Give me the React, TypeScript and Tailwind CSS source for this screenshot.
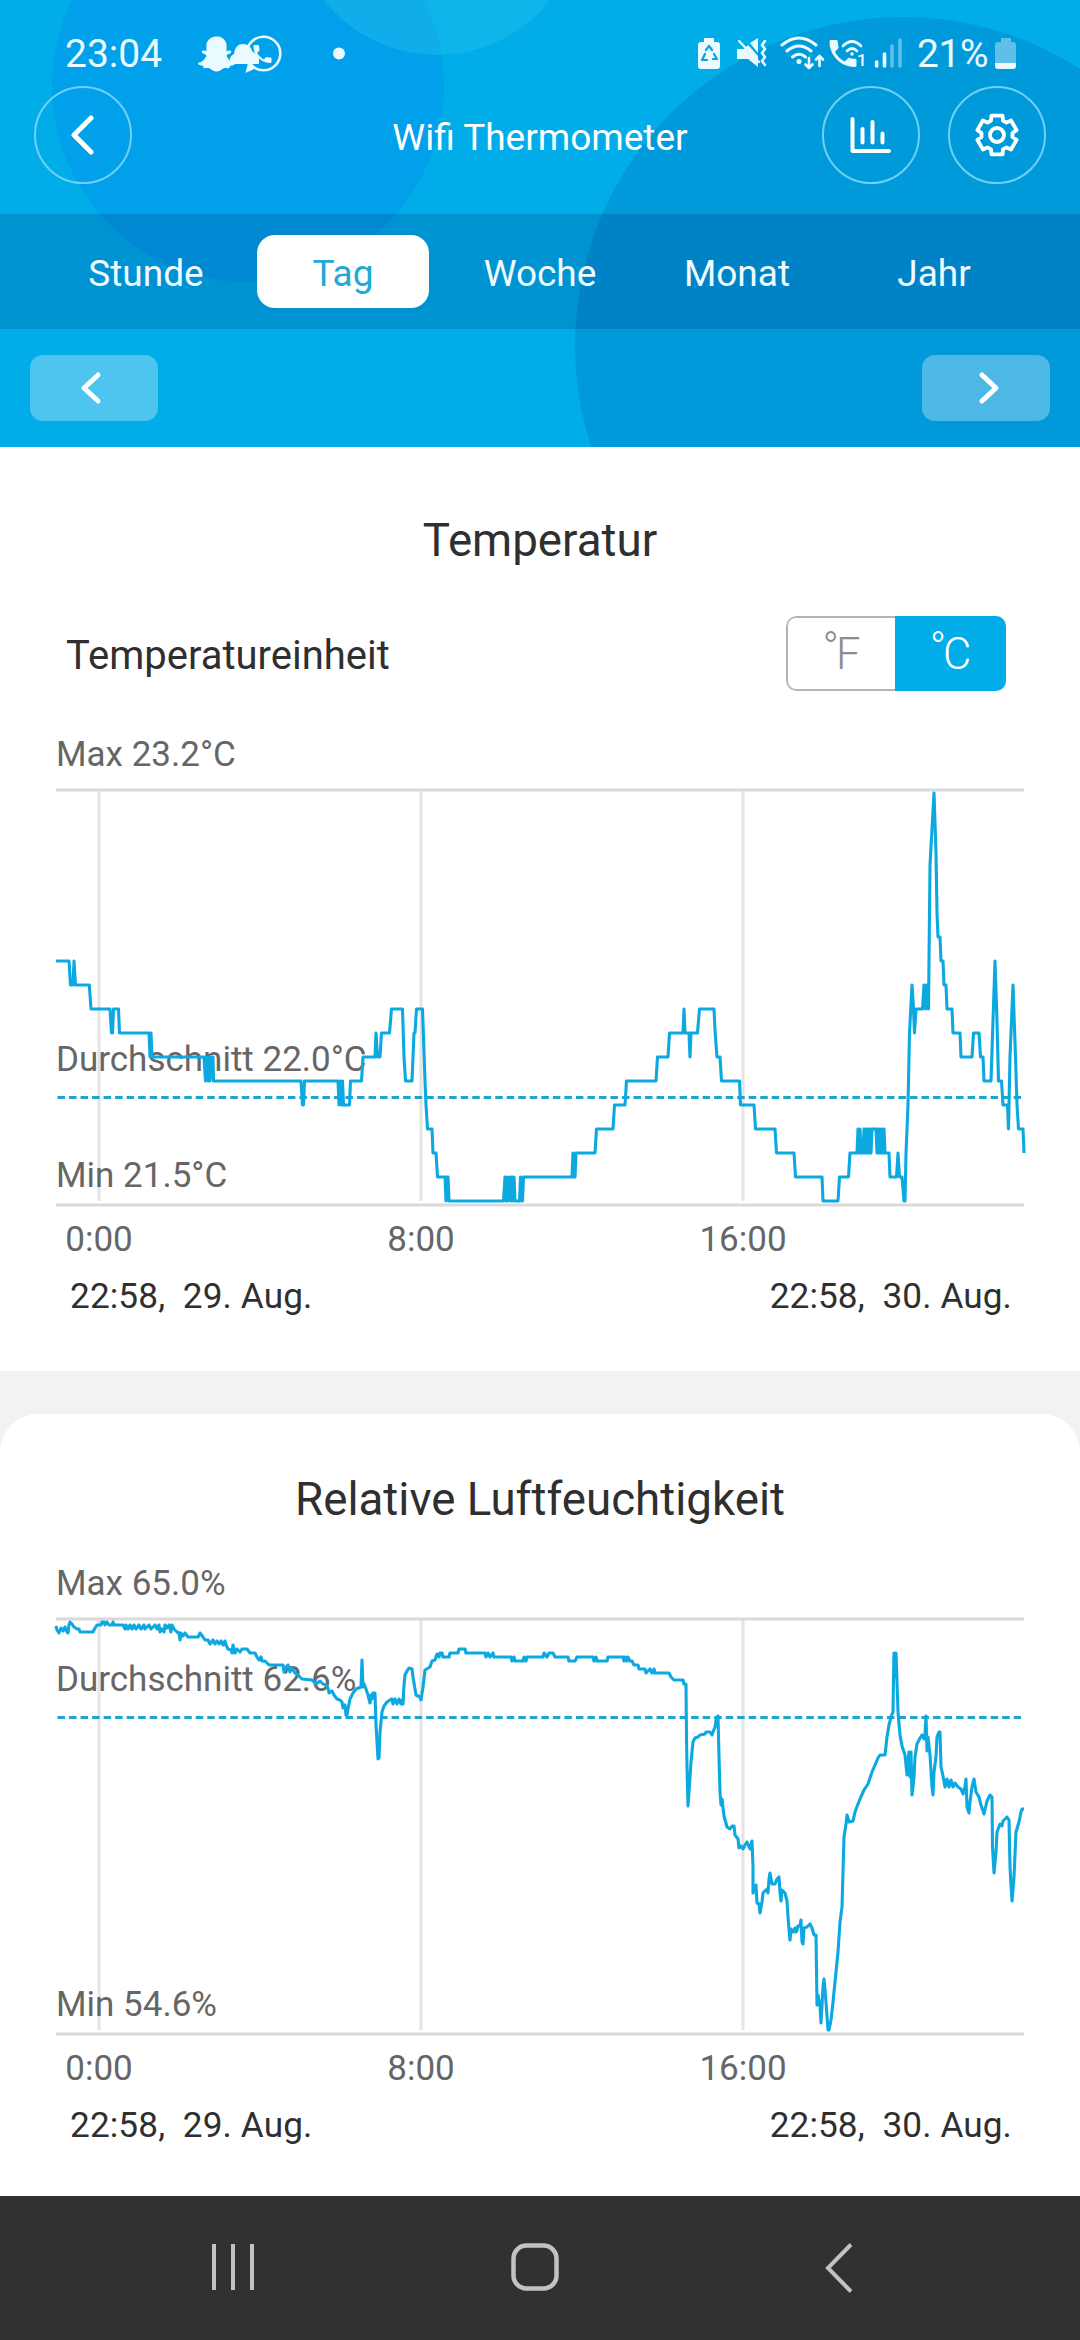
import React from 'react';
import { FaSnapchatGhost } from 'react-icons/fa';

const TABS = ['Stunde', 'Tag', 'Woche', 'Monat', 'Jahr'];

// [x, tenths of a degree above the minimum]
const TEMPERATURE = [
  [56, 10], [69, 10], [70.5, 9], [73, 9], [74, 10], [75.5, 9], [89.3, 9], [91, 8], [110, 8], [111.5, 7], [112.5, 7], [113.5, 8],
  [118.5, 8], [119.5, 7], [149, 7], [150, 6], [151, 7], [152, 6], [204, 6], [205.5, 5], [206.5, 6], [208, 5], [209, 6],
  [210, 5], [211.5, 6], [213, 6], [213.5, 5], [301, 5], [302.5, 4], [303.5, 4], [304.5, 5], [338, 5], [339, 4], [340.5, 5], [341.5, 4],
  [342.5, 5], [343.5, 4], [349.5, 4], [350.5, 5], [361.5, 5], [363, 6], [375, 6], [376, 7], [377.5, 6], [380, 6], [381.5, 7],
  [389.5, 7], [391.5, 8], [402.5, 8], [404, 6], [405.5, 5], [412, 5], [414, 7], [415, 7], [416.5, 8], [422.5, 8],
  [425, 5], [426, 4], [427.5, 3], [432, 3], [433, 2], [436, 2], [437.5, 1], [445, 1], [446, 0], [447, 1], [448, 1],
  [449, 0], [503.5, 0], [505, 1], [506, 0], [507, 1], [508, 0], [510, 1], [511, 0], [512, 1], [513, 0], [514, 1], [515, 0],
  [519.5, 0], [520.5, 1], [521.5, 0], [522.5, 0], [523.5, 1], [572, 1], [573, 2], [574, 1], [575, 1], [576, 2], [595, 2],
  [596.5, 3], [613, 3], [614.5, 4], [625, 4], [626.5, 5], [656, 5], [657.5, 6], [668, 6], [669.5, 7], [683, 7],
  [684, 8], [685, 7], [689, 7], [690, 6], [691, 7], [697.5, 7], [699.5, 8], [714, 8], [715, 7.1], [717, 6], [720, 6],
  [721.5, 5], [739.5, 5], [740.5, 4], [754, 4], [755.5, 3], [775, 3], [776.5, 2], [794, 2], [795.5, 1], [822, 1],
  [823, 0], [838, 0], [839.5, 1], [848.5, 1], [850, 2], [857, 2], [858, 3], [859, 2], [860, 3], [861, 2], [863, 2],
  [864, 3], [865, 2], [866, 3], [867, 2], [868, 3], [869, 2], [870, 3], [871, 2], [872, 3], [874, 3], [876, 3],
  [877, 2], [878, 3], [879, 2], [880, 3], [881, 2], [882, 3], [883, 2], [884, 3], [885, 2], [889, 2], [890, 1], [896.5, 1],
  [898, 2], [899.5, 1], [902, 1], [904, 0], [905, 0], [906, 2], [908, 4], [909.5, 7], [912, 9], [913.5, 8], [914.5, 7],
  [916, 8], [922.5, 8], [924, 9], [925.5, 8], [926.5, 9], [928.5, 8], [930, 14], [932, 15.5], [934, 17], [936, 14.5],
  [937, 12], [938, 11], [940, 11], [941, 10], [943, 10], [944, 9], [946, 9], [947, 8], [952, 8], [953, 7], [960, 7],
  [961, 6], [972, 6], [973.5, 7], [979, 7], [980.5, 6], [983, 6], [984, 5], [991, 5], [993, 7.5], [995, 10],
  [997, 7.5], [998.5, 5], [1001.5, 5], [1003, 4], [1007.5, 4], [1008.5, 3], [1010, 6], [1013, 9], [1015.5, 6], [1017, 4],
  [1018.5, 3], [1023, 3], [1024, 2],
]
  .map(([x, n]) => `${x},${413 - 24 * n}`)
  .join(' ');

const HUMIDITY =
  '56,9 57,13 59,16 61,11 63,14 65,10 67,15 68,16 69,8 70,5 72,7 74,10 77,12 79,12 80,15 93,15 95,11 97,8 101,8 102,5 104,5 105,8 107,5 109,8 112,8 113,5 114,8 123,8 125,12 126,8 128,12 130,8 132,12 134,8 136,12 139,8 141,12 144,8 145,12 149,8 151,12 155,8 157,12 159,8 160,15 162,12 164,15 165,8 167,11 169,8 171,15 172,8 174,12 177,15 179,16 180,23 181,16 183,19 185,16 188,20 198,20 200,16 203,20 205,23 208,23 210,27 213,23 215,27 217,24 219,27 221,24 223,28 225,24 226,28 228,32 231,33 232,36 233,28 235,36 237,32 240,35 242,32 247,32 250,36 255,36 257,40 259,43 261,40 262,44 265,44 269,48 283,48 284,55 286,50 288,48 290,55 292,51 295,56 299,59 302,62 312,63 316,67 320,64 323,67 326,68 328,71 329,76 332,74 334,78 337,82 340,83 342,85 343,91 345,88 346,98 347,98 348,92 350,82 353,76 356,72 361,70 362,43 363,70 364,67 366,72 368,78 370,86 371,78 372,82 373,76 375,76 376,108 378,142 379,141 380,115 382,95 384,89 387,85 390,83 392,82 393,87 395,82 397,87 399,82 401,87 402,83 403,87 404,68 405,58 407,54 409,51 412,52 413,60 416,78 420,80 421,83 423,70 425,53 430,50 432,44 435,43 437,37 439,40 440,36 442,36 443,40 449,40 450,36 458,36 459,32 465,32 466,36 485,36 486,40 488,36 490,40 493,36 494,40 511,40 512,44 514,40 515,44 523,44 524,40 526,44 527,40 543,40 544,36 547,40 549,36 553,36 555,40 568,40 569,44 575,44 577,40 593,40 594,44 596,40 597,44 607,44 608,40 623,40 624,44 625,40 627,44 628,40 630,44 632,44 634,48 638,48 639,52 645,52 646,56 650,52 652,56 654,52 655,56 669,56 671,60 674,63 683,63 684,67 686,67 686.5,120 687,150 688,189 690,160 691,145 693,125 695,121 698,120 700,118 705,117 706,115 710,115 712,118 713,115 715,110 716,103 718,99 719,140 720,175 721,188 722,182 724,199 727,210 730,212 732,209 734,209 735,218 738,222 739,231 741,229 743,232 745,228 747,225 750,232 752,224 753,250 753,276 754,272 756,268 757,286 759,287 760,296 762,285 763,276 767,272 768,276 769,262 770,256 772,267 775,267 777,262 779,260 780,275 781,284 782,273 785,276 787,284 788,300 789,312 790,323 791,312 793,315 795,311 796,315 797,313 798,309 800,309 801,303 802,325 803,327 804,311 807,310 810,307 812,311 814,318 816,318 817,388 818,378 820,389 821,406 823,370 824,362 826,385 828,413 829,413 831,403 833,385 835,365 838,335 840,305 842,290 844,220 846,207 847,198 849,205 853,204 855,195 858,187 860,182 864,173 868,167 872,155 875,148 878,141 880,138 885,138 887,120 889,108 891,100 893,95 893.5,60 894,36 895,60 896,36 898,95 900,118 902,129 905,138 907,158 908,145 909,135 910,160 911,135 912,178 914,160 915,140 917,127 920,121 922,118 924,122 925,118 926,99 927,134 928,120 930,138 932,170 933,178 934,155 936,140 937,120 939,115 940,115 941,150 943,159 945,170 947,162 949,170 951,163 953,170 955,166 958,170 961,172 963,177 965,170 966,162 967,190 969,196 970,185 972,170 974,162 976,175 979,180 981,188 984,197 987,184 990,178 992,180 992.5,230 994,256 996,235 997,215 1000,207 1002,209 1003,204 1007,200 1009,203 1010,250 1011,268 1012,284 1014,260 1016,215 1019,205 1021,195 1022,192 1024,192';

const HANDSET =
  'M6.62 10.79c1.44 2.83 3.76 5.14 6.59 6.59l2.2-2.2c.27-.27.67-.36 1.02-.24 1.12.37 2.33.57 3.57.57.55 0 1 .45 1 1V20c0 .55-.45 1-1 1-9.390 0-17-7.610-17-17 0-.55.45-1 1-1h3.500c.55 0 1 .45 1 1 0 1.250.2 2.450.57 3.570.11.35.03.74-.25 1.020l-2.200 2.200z';

// outline of a cog with six teeth, centred on 0,0
const COG = Array.from({ length: 6 })
  .flatMap((_, i) =>
    [[-16, 20.2], [16, 20.2], [22.5, 15.6], [37.5, 15.6]].map(([deg, r]) => {
      const a = ((i * 60 + deg) * Math.PI) / 180;
      return `${(r * Math.sin(a)).toFixed(2)},${(-r * Math.cos(a)).toFixed(2)}`;
    })
  )
  .join(' ');

const StatusBar = () => (
  <div className="flex h-[86px] justify-between pl-[65px] pr-[63px] text-[39px] leading-[42px] text-[#eafaff]">
    <div className="flex pt-[33px]">
      <span>23:04</span>
      <div className="relative ml-[36px] h-[42px] w-[152px]">
        <FaSnapchatGhost className="absolute left-0 top-[2px] h-[38px] w-[37px]" />
        <svg className="absolute left-[-1px] top-0" width="154" height="42" viewBox="196 33 154 42">
          <path d="M229 64c-1-6 1-9 4-10c1-7 4-10 9-10c5 0 8 3 9 7l7 5v8z" fill="currentColor" />
          <circle cx="262.5" cy="53.5" r="16.8" fill="none" stroke="currentColor" strokeWidth="2.6" />
          <path d="M244.500 73l3-12l8 7z" fill="currentColor" />
          <path d={HANDSET} transform="translate(249.500 42) scale(1)" fill="currentColor" />
          <circle cx="338" cy="53.5" r="6" fill="currentColor" />
        </svg>
      </div>
    </div>
    <div className="flex pt-[33px]">
      <div className="relative">
        <svg width="220" height="42" viewBox="696 33 220 42" fill="none" stroke="currentColor" strokeLinecap="round" strokeLinejoin="round">
          <path d="M703 38h10v4h3q3 0 3 3v21q0 3-3 3h-16q-3 0-3-3v-21q0-3 3-3h3z" fill="currentColor" stroke="none" />
          <path d="M705 50l3-4l3 4M713 54l3 5h-4M706 60h-5l3-6" stroke="#0aa3df" strokeWidth="2.2" />
          <path d="M736 49h7l4-4L757 56v11l-10-8h-11zM749 43l8-5v15z" fill="currentColor" stroke="none" />
          <path d="M738 41l20 21" strokeWidth="2.4" />
          <path d="M764 41l-3 4l3 4l-3 4l3 4l-3 4l3 4" strokeWidth="2.6" />
          <path d="M781 45q17-14 34 0M786 51q12-10 24 0M791.5 57q6.500-5.500 13 0" strokeWidth="3" />
          <circle cx="798" cy="61.500" r="2.500" fill="currentColor" stroke="none" />
          <path d="M808 58v10M804.500 64.500l3.500 3.500l3.500-3.500M818.500 66v-10M815 59.500l3.500-3.500l3.500 3.500" strokeWidth="2.6" />
          <path d={HANDSET} transform="translate(824 35.500) scale(1.5)" fill="currentColor" stroke="none" />
          <path d="M842 46q9-9 18 0M846 51q5-5 10 0" strokeWidth="2.600" />
          <circle cx="851" cy="54" r="1.800" fill="currentColor" stroke="none" />
          <path d="M875.700 62v4M883.500 54v12" strokeWidth="3.600" />
          <path d="M891 46v20M899 40v26" strokeWidth="3.600" opacity=".4" />
        </svg>
        <span className="absolute left-[160px] top-[17px] text-[17px] font-medium leading-[20px]">1</span>
      </div>
      <span className="tracking-[-0.5px]">21%</span>
      <svg className="ml-[7px]" width="22" height="42" viewBox="994 33 22 42" fill="currentColor">
        <path d="M1000 38h10v4h2q3 0 3 3v18h-21v-18q0-3 3-3h3z" opacity=".4" />
        <path d="M994 63h21v3q0 3-3 3h-15q-3 0-3-3z" />
      </svg>
    </div>
  </div>
);

const RoundButton = ({ children }: { children: React.ReactNode }) => (
  <button className="flex h-[98px] w-[98px] items-center justify-center rounded-full border-2 border-[#6fd0f5]">
    {children}
  </button>
);

const Header = () => (
  <header className="relative h-[447px] overflow-hidden bg-[#00ade9] text-white">
    {/* Decorative bubbles */}
    <svg className="absolute inset-0" width="1080" height="447" viewBox="0 0 1080 447">
      <circle cx="248" cy="86" r="196" fill="#00a0ea" />
      <circle cx="437" cy="-89" r="144" fill="#25c0ec" fillOpacity=".4" />
      <circle cx="903" cy="345" r="328" fill="#009ada" />
    </svg>

    <div className="relative">
      <StatusBar />

      <div className="grid h-[128px] grid-cols-[224px_1fr_224px] pl-[34px] pr-[34px]">
        <RoundButton>
          <svg width="24" height="42" viewBox="0 0 24 42" fill="none" stroke="white" strokeWidth="5" strokeLinecap="round" strokeLinejoin="round">
            <path d="M20 4L3 21l17 17" />
          </svg>
        </RoundButton>
        <h1 className="pt-[30px] text-center text-[37px] leading-[44px]">Wifi Thermometer</h1>
        <div className="flex justify-end gap-[28px]">
          <RoundButton>
            <svg width="44" height="44" viewBox="849 114 44 44" fill="none" stroke="white" strokeWidth="4" strokeLinecap="round" strokeLinejoin="round">
              <path d="M852.500 120v32h36.500M862.500 130v13.500M872.500 123v20.500M882.500 134.500v9" />
            </svg>
          </RoundButton>
          <RoundButton>
            <svg width="48" height="48" viewBox="-24 -24 48 48" fill="none" stroke="white" strokeWidth="3.800" strokeLinejoin="round">
              <polygon points={COG} />
              <circle r="7" />
            </svg>
          </RoundButton>
        </div>
      </div>

      <nav className="grid h-[115px] grid-cols-5 items-center bg-[#000050]/15 px-[47.5px]">
        {TABS.map((tab) => (
          <button
            key={tab}
            className={`mx-auto h-[73px] w-[172px] rounded-[18px] pt-[4px] text-[37px] ${
              tab === 'Tag' ? 'bg-white text-[#1ea9d8]' : 'text-[#effbff]'
            }`}
          >
            {tab}
          </button>
        ))}
      </nav>

      <div className="flex justify-between px-[30px] pt-[26px]">
        <button className="flex h-[66px] w-[128px] items-center justify-center rounded-[13px] bg-white/30 pr-[6px]">
          <svg width="22" height="34" viewBox="0 0 22 34" fill="none" stroke="white" strokeWidth="5" strokeLinecap="round" strokeLinejoin="round">
            <path d="M18 4L4 17l14 13" />
          </svg>
        </button>
        <button className="flex h-[66px] w-[128px] items-center justify-center rounded-[13px] bg-white/30 pl-[5px]">
          <svg width="22" height="34" viewBox="0 0 22 34" fill="none" stroke="white" strokeWidth="5" strokeLinecap="round" strokeLinejoin="round">
            <path d="M4 4l14 13L4 30" />
          </svg>
        </button>
      </div>
    </div>
  </header>
);

const Degree = ({ unit }: { unit: string }) => (
  <span className="flex justify-center pt-[4px]">
    <span className="-mt-[6px] mb-[6px]">°</span>
    <span className="-ml-[3px]">{unit}</span>
  </span>
);

interface ChartProps {
  points: string;
  max: string;
  average: string;
  min: string;
  averageY: number;
}

const Chart = ({ points, max, average, min, averageY }: ChartProps) => (
  <svg className="mx-[50px] block h-[540px] w-[980px]" viewBox="50 -64 980 540" fontSize="35" fill="#666">
    <path d="M99 2V413M421 2V413M743 2V413" stroke="#e4e4e4" strokeWidth="3" />
    <path d="M56 2H1024M56 417H1024" stroke="#dadada" strokeWidth="3" />
    <text x="56" y="-22">{max}</text>
    <text x="56" y={averageY - 27}>{average}</text>
    <text x="56" y="399">{min}</text>
    <path d={`M57.500 ${averageY}H1021`} stroke="#1fa3cf" strokeWidth="3" strokeDasharray="7.500 4.020" />
    <polyline points={points} fill="none" stroke="#0ca9e1" strokeWidth="3.100" strokeLinejoin="round" />
    <g textAnchor="middle">
      <text x="99" y="463">0:00</text>
      <text x="421" y="463">8:00</text>
      <text x="743" y="463">16:00</text>
    </g>
  </svg>
);

const DateRange = () => (
  <div className="mt-[12px] flex justify-between whitespace-pre pl-[70px] pr-[68px] text-[35.2px] leading-[40px] tracking-[0.1px] text-[#2f2f2f]">
    <span>22:58,  29. Aug.</span>
    <span>22:58,  30. Aug.</span>
  </div>
);

const App = () => {
  return (
    <div className="flex h-[2340px] w-[1080px] flex-col overflow-hidden bg-[#f2f2f2] font-['Roboto',sans-serif] text-[#2f2f2f]">
      <Header />

      {/* Temperature */}
      <section className="h-[924px] bg-white pt-[67px]">
        <h2 className="text-center text-[45.7px] leading-[54px]">Temperatur</h2>
        <div className="mt-[47px] flex h-[76px] items-center justify-between pl-[66px] pr-[74px]">
          <span className="pt-[5px] text-[40px]">Temperatureinheit</span>
          <div className="flex h-[75px] w-[220px] overflow-hidden rounded-[10px] text-[43.5px] font-light">
            <button className="w-[109px] rounded-l-[10px] border-2 border-r-0 border-[#b4b4b4] text-[#8c8c8c]">
              <Degree unit="F" />
            </button>
            <button className="flex-1 bg-[#00ade9] text-white">
              <Degree unit="C" />
            </button>
          </div>
        </div>
        <div className="mt-[33px]">
          <Chart points={TEMPERATURE} max="Max 23.2°C" average="Durchschnitt 22.0°C" min="Min 21.5°C" averageY={309.5} />
        </div>
        <DateRange />
      </section>

      {/* Humidity */}
      <section className="mt-[43px] flex-1 rounded-t-[38px] bg-white pt-[59px]">
        <h2 className="text-center text-[45.7px] leading-[54px]">Relative Luftfeuchtigkeit</h2>
        <div className="mt-[26px]">
          <Chart points={HUMIDITY} max="Max 65.0%" average="Durchschnitt 62.6%" min="Min 54.6%" averageY={100.5} />
        </div>
        <DateRange />
      </section>

      {/* Android navigation keys */}
      <footer className="flex h-[144px] bg-[#313131] pl-[211px] pt-[47px]">
        <svg width="44" height="48" viewBox="0 0 44 48" fill="none" stroke="#c2c2c2" strokeWidth="4">
          <path d="M3 1v46M22 1v46M41 1v46" />
        </svg>
        <svg className="ml-[256px]" width="48" height="48" viewBox="0 0 48 48" fill="none" stroke="#c2c2c2" strokeWidth="4.500">
          <rect x="2.500" y="2.500" width="43" height="43" rx="13" />
        </svg>
        <svg className="ml-[266px]" width="28" height="50" viewBox="0 0 28 50" fill="none" stroke="#c2c2c2" strokeWidth="4">
          <path d="M26 1.500L3 25l23 23.500" />
        </svg>
      </footer>
    </div>
  );
};

export default App;
